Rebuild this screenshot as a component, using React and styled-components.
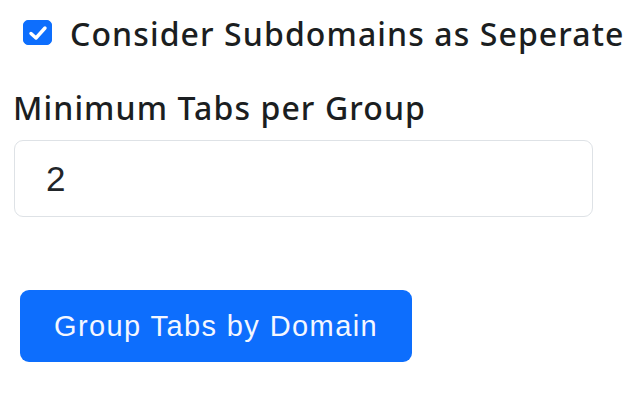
import React from "react";
import styled, { createGlobalStyle } from "styled-components";

const Global = createGlobalStyle`
  html, body { margin: 0; padding: 0; background: #fff; }
  body { font-family: "Noto Sans", "DejaVu Sans", sans-serif; color: #212529; }
  * { box-sizing: border-box; }
`;

const Page = styled.div`
  display: flex;
  flex-direction: column;
  align-items: flex-start;
  padding: 14px 0 0 13px;
  width: 640px;
  height: 400px;
`;

const CheckRow = styled.label`
  display: flex;
  align-items: flex-start;
  gap: 18px;
  margin-left: 10px;
  cursor: pointer;
`;

const Box = styled.span`
  display: flex;
  align-items: center;
  justify-content: center;
  width: 29px;
  height: 25px;
  margin-top: 6px;
  border-radius: 5px;
  background: ${(p) => (p.$checked ? "#0d6efd" : "#fff")};
  border: 1px solid ${(p) => (p.$checked ? "#0d6efd" : "#dee2e6")};
`;

const Text = styled.span`
  font-family: "Noto Sans", "DejaVu Sans", sans-serif;
  font-weight: 500;
  font-size: 32px;
  line-height: 40px;
  letter-spacing: 1.1px;
  color: #1b1e21;
  white-space: nowrap;
`;

const FieldLabel = styled(Text).attrs({ as: "label" })`
  display: block;
  margin-top: 34px;
`;

const NumberInput = styled.input`
  margin-top: 12px;
  margin-left: 1px;
  width: 579px;
  height: 77px;
  padding: 0 0 0 31px;
  border: 1.5px solid #dee2e6;
  border-radius: 9px;
  background: #fff;
  font-family: "Liberation Sans", Arial, sans-serif;
  font-size: 35px;
  color: #212529;
  outline: none;
  appearance: textfield;
  &::-webkit-inner-spin-button,
  &::-webkit-outer-spin-button { -webkit-appearance: none; margin: 0; }
`;

const PrimaryButton = styled.button`
  margin-top: 73px;
  margin-left: 7px;
  width: 392px;
  height: 72px;
  display: flex;
  align-items: center;
  justify-content: center;
  border: none;
  border-radius: 9px;
  background: #0d6efd;
  color: #f4f7ff;
  font-family: "Liberation Sans", Arial, sans-serif;
  font-size: 29px;
  letter-spacing: 1.4px;
  cursor: pointer;
`;

function Checkbox({ checked }) {
  return (
    <Box $checked={checked}>
      {checked && (
        <svg width="22" height="18" viewBox="0 0 22 18" fill="none">
          <path d="M4 9.5l5 4.5 9-10" stroke="#fff" strokeWidth="3.4" strokeLinecap="round" strokeLinejoin="round" />
        </svg>
      )}
    </Box>
  );
}

export default function App() {
  return (
    <>
      <Global />
      <Page>
        <CheckRow>
          <Checkbox checked />
          <Text>Consider Subdomains as Seperate</Text>
        </CheckRow>
        <FieldLabel htmlFor="minTabs">Minimum Tabs per Group</FieldLabel>
        <NumberInput id="minTabs" type="number" defaultValue={2} />
        <PrimaryButton>Group Tabs by Domain</PrimaryButton>
      </Page>
    </>
  );
}
